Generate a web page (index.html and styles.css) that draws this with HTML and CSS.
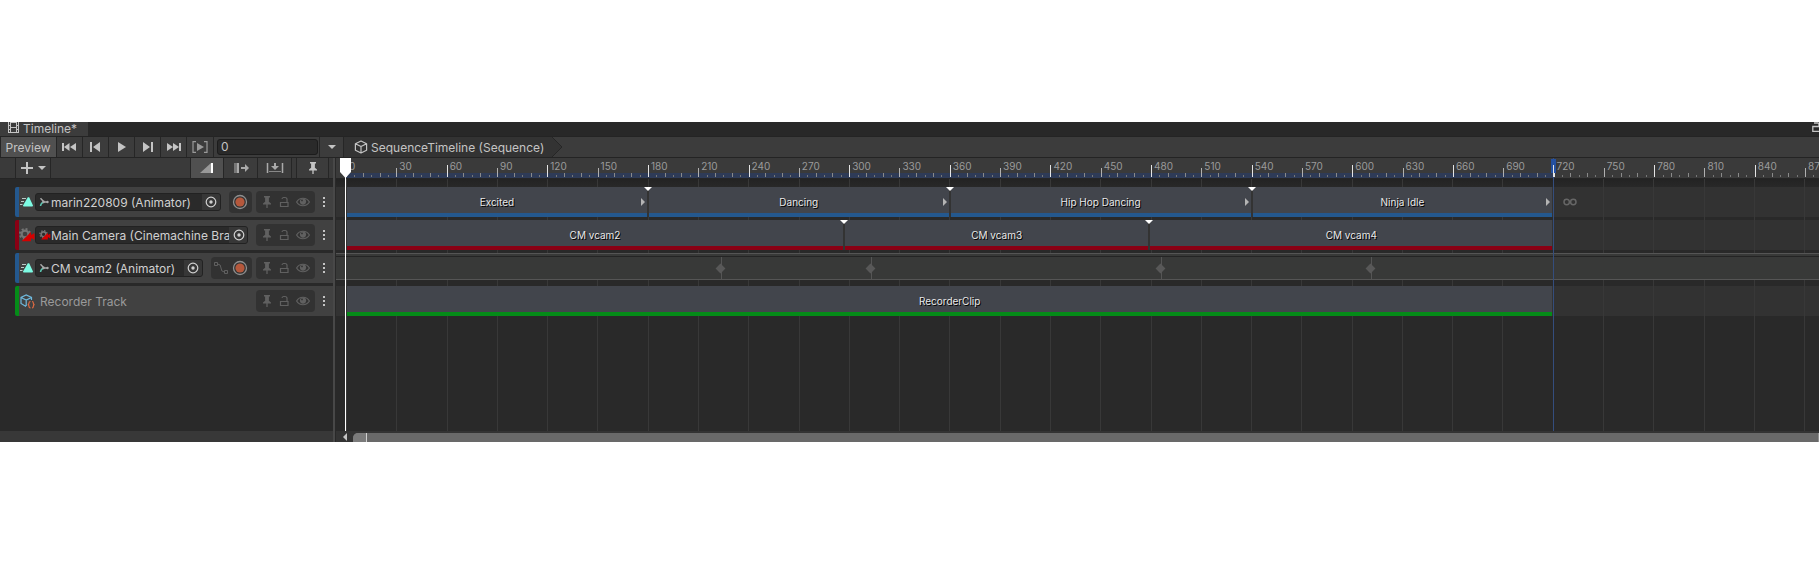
FILE: index.html
```html
<!DOCTYPE html>
<html lang="en">
<head>
<meta charset="utf-8">
<title>Timeline</title>
<link rel="stylesheet" href="styles.css">
</head>
<body>
<svg class="defs" aria-hidden="true">
  <symbol id="pin" viewBox="0 0 10 14"><path d="M2 1h6v1.6H6.9v4.2L9 8.4v1H1v-1l2.100-1.600V2.600H2z" fill="currentColor"/><path d="M5 9v4" stroke="currentColor" stroke-width="1.300"/></symbol>
  <symbol id="lock" viewBox="0 0 10 12"><path d="M1.500 6.500h7.500v4h-7.500zM8 6.500V3a2 2 0 0 0-2-1.500H4.500A1.800 1.800 0 0 0 3 3" fill="none" stroke="currentColor" stroke-width="1.200"/></symbol>
  <symbol id="eye" viewBox="0 0 14 10"><path d="M.6 5C3.500 0 10.500 0 13.400 5 10.500 10 3.500 10 .6 5z" fill="none" stroke="currentColor" stroke-width="1.200"/><circle cx="7" cy="4.600" r="3.100" fill="currentColor"/><circle cx="6" cy="3.400" r=".9" fill="#323232"/></symbol>
  <symbol id="picker" viewBox="0 0 12 12"><circle cx="6" cy="6" r="4.800" fill="none" stroke="currentColor" stroke-width="1.200"/><circle cx="6" cy="6" r="1.700" fill="currentColor"/></symbol>
  <symbol id="record" viewBox="0 0 16 16"><circle cx="8" cy="8" r="6.500" fill="none" stroke="#8f8f8f" stroke-width="1.300"/><circle cx="8" cy="8" r="4.600" fill="#b5583c"/></symbol>
  <symbol id="anim" viewBox="0 0 14 12"><path d="M7.800 1.200h1.400L13 9.500q0 1-1 1H4q-1.200 0-1-1z" fill="#7dfbe3"/><path d="M2 2.500H6M1 5.500h3M0 8.500h2.500" stroke="#b9c9c6" stroke-width="1"/></symbol>
  <symbol id="rig" viewBox="0 0 10 10"><path d="M1.500 1.200l3 3.300M5 5h4" stroke="#a9a9a9" stroke-width="1.400"/><path d="M4.500 5.300Q2 6 1.500 9" fill="none" stroke="#5cc5b0" stroke-width="1.500"/><circle cx="4.500" cy="4.900" r="1.300" fill="#a9a9a9"/><circle cx="8.500" cy="5" r="1.200" fill="#a9a9a9"/></symbol>
  <symbol id="cine" viewBox="0 0 16 14"><circle cx="6" cy="6" r="3.400" fill="none" stroke="#757575" stroke-width="2.200"/><circle cx="6" cy="6" r="5.100" fill="none" stroke="#757575" stroke-width="1.800" stroke-dasharray="2 2"/><path d="M2.500 13.200L12 4v2.500l1 .3 1.500-1.300h1v6h-1L13 10.300l-1 .4v2.500z" fill="#d40000"/></symbol>
  <symbol id="cube" viewBox="0 0 14 14"><path d="M7 1l5.600 2.700v6.600L7 13l-5.600-2.700V3.700zM1.400 3.700L7 6.500l5.600-2.800M7 6.500V13" fill="none" stroke="currentColor" stroke-width="1.200" stroke-linejoin="round"/></symbol>
  <symbol id="dots" viewBox="0 0 4 12"><path d="M1 1h2v2H1zM1 5h2v2H1zM1 9h2v2H1z" fill="#c4c4c4"/></symbol>
</svg>

<main class="editor">
  <header class="tabs">
    <div class="tab">
      <svg width="13" height="12" viewBox="0 0 13 12"><path d="M1.500 0v11M11.500 0v11M3.500 0v11M9.500 0v11M3 .5h7M1 10.500h11M3 5.500h7M1 3.500h2M1 7.500h2M10 3.500h2M10 7.500h2" stroke="#c4c4c4" fill="none"/></svg>
      <span>Timeline*</span>
    </div>
    <button class="tab-lock" aria-label="Lock"><svg width="7" height="10" viewBox="0 0 7 10"><path d="M8 4.500H.8v4.800H8M2 1h4q1 0 1 3" fill="none" stroke="#c4c4c4" stroke-width="1.300"/></svg></button>
  </header>

  <nav class="toolbar">
    <button class="tool preview">Preview</button>
    <button class="tool" aria-label="First frame"><svg width="16" height="10" viewBox="0 0 16 10"><path d="M1 1h2v8H1zM8.500 1v8L3 5zM15 1v8L9 5z" fill="currentColor"/></svg></button>
    <button class="tool" aria-label="Previous frame"><svg width="12" height="10" viewBox="0 0 12 10"><path d="M1 0h2v10H1zM11 0v10L4 5z" fill="currentColor"/></svg></button>
    <button class="tool" aria-label="Play"><svg width="10" height="12" viewBox="0 0 10 12"><path d="M1 1v10l8-5z" fill="currentColor"/></svg></button>
    <button class="tool" aria-label="Next frame"><svg width="12" height="10" viewBox="0 0 12 10"><path d="M9 0h2v10H9zM1 0v10l7-5z" fill="currentColor"/></svg></button>
    <button class="tool" aria-label="Last frame"><svg width="16" height="10" viewBox="0 0 16 10"><path d="M13 1h2v8h-2zM7 1v8l6-4zM1 1v8l6-4z" fill="currentColor"/></svg></button>
    <button class="tool dim" aria-label="Play range"><svg width="16" height="12" viewBox="0 0 16 12"><path d="M4 .6H1v10.800h3M12 .6h3v10.800h-3" fill="none" stroke="currentColor" stroke-width="1.200"/><path d="M5 2v8l7-4z" fill="currentColor"/></svg></button>
    <div class="frame-box"><input class="frame" aria-label="Frame" value="0"></div>
    <button class="tool drop" aria-label="Select timeline"><svg width="8" height="4" viewBox="0 0 8 4"><path d="M0 0h8L4 4z" fill="currentColor"/></svg></button>
    <a class="crumb" href="#"><svg width="14" height="14"><use href="#cube"/></svg><span>SequenceTimeline (Sequence)</span></a><svg width="11" height="20" viewBox="0 0 11 20"><path d="M0 0l10 10L0 20z" fill="#333"/><path d="M0 0l10 10L0 20" fill="none" stroke="#262626"/></svg>
  </nav>

  <div class="panes">
    <section class="left">
      <div class="options">
        <button class="add" aria-label="Add track"><svg width="26" height="12" viewBox="0 0 26 12"><path d="M1 6h12M7 0v12" stroke="currentColor" stroke-width="2"/><path d="M18 4h8l-4 4z" fill="currentColor"/></svg></button>
        <button class="mode on" aria-label="Mix mode"><svg width="14" height="10" viewBox="0 0 14 10"><path d="M0 10L11 0v10z" fill="#999"/><path d="M11 0h2v10h-2z" fill="#fff"/></svg></button>
        <button class="mode" aria-label="Ripple mode"><svg width="16" height="10" viewBox="0 0 16 10"><path d="M1 0h3v10H1z" fill="#777"/><path d="M4 0h2v10H4z" fill="#aaa"/><path d="M8 4h4V1l4 4-4 4V6H8z" fill="#aaa"/></svg></button>
        <button class="mode" aria-label="Replace mode"><svg width="18" height="10" viewBox="0 0 18 10"><path d="M1.500 0v10M16.500 0v10" stroke="#aaa" stroke-width="1.500"/><path d="M3 8.500h12" stroke="#888"/><path d="M8 0h2v3h3L9 7 5 3h3z" fill="#aaa"/></svg></button>
        <button class="mode pin" aria-label="Show markers"><svg width="10" height="14"><use href="#pin"/></svg></button>
      </div>
      <ul class="tracks">
        <li class="track blue">
          <svg class="kind" width="14" height="12"><use href="#anim"/></svg>
          <div class="field w-a"><svg width="10" height="10"><use href="#rig"/></svg><span>marin220809 (Animator)</span><button aria-label="Pick object"><svg width="12" height="12"><use href="#picker"/></svg></button></div>
          <div class="group rec"><button aria-label="Record"><svg width="16" height="16"><use href="#record"/></svg></button></div>
          <div class="group states"><button aria-label="Pin"><svg width="10" height="14"><use href="#pin"/></svg></button><button aria-label="Lock"><svg width="10" height="12"><use href="#lock"/></svg></button><button aria-label="Mute"><svg width="14" height="10"><use href="#eye"/></svg></button></div>
          <button class="more" aria-label="More"><svg width="4" height="12"><use href="#dots"/></svg></button>
        </li>
        <li class="track red">
          <svg class="kind" width="16" height="14"><use href="#cine"/></svg>
          <div class="field w-b"><svg width="12" height="10"><use href="#cine"/></svg><span>Main Camera (Cinemachine Bra</span><button aria-label="Pick object"><svg width="12" height="12"><use href="#picker"/></svg></button></div>
          <div class="group states solo"><button aria-label="Pin"><svg width="10" height="14"><use href="#pin"/></svg></button><button aria-label="Lock"><svg width="10" height="12"><use href="#lock"/></svg></button><button aria-label="Mute"><svg width="14" height="10"><use href="#eye"/></svg></button></div>
          <button class="more" aria-label="More"><svg width="4" height="12"><use href="#dots"/></svg></button>
        </li>
        <li class="track blue">
          <svg class="kind" width="14" height="12"><use href="#anim"/></svg>
          <div class="field w-c"><svg width="10" height="10"><use href="#rig"/></svg><span>CM vcam2 (Animator)</span><button aria-label="Pick object"><svg width="12" height="12"><use href="#picker"/></svg></button></div>
          <div class="group rec"><button aria-label="Curves"><svg width="14" height="12" viewBox="0 0 14 12"><path d="M.5.500h3v3h-3zM10.500 8.500h3v3h-3zM3.500 2Q7 2 7 6t3.500 4" fill="none" stroke="#606060"/></svg></button><button aria-label="Record"><svg width="16" height="16"><use href="#record"/></svg></button></div>
          <div class="group states"><button aria-label="Pin"><svg width="10" height="14"><use href="#pin"/></svg></button><button aria-label="Lock"><svg width="10" height="12"><use href="#lock"/></svg></button><button aria-label="Mute"><svg width="14" height="10"><use href="#eye"/></svg></button></div>
          <button class="more" aria-label="More"><svg width="4" height="12"><use href="#dots"/></svg></button>
        </li>
        <li class="track green">
          <svg class="kind" width="15" height="15" viewBox="0 0 15 15"><path d="M11.500 6V3.500L6.200 1 1 3.500v6L6 12.500M1 3.500L6.200 6l5.300-2.500M6.200 6v6" fill="none" stroke="#6fb9dd" stroke-width="1.200"/><path d="M10.500 7.500q-1.500 0-1.500 1.500t-1.200 1.700q1.200.2 1.200 1.700t1.500 1.500M12 7.500q1.300 0 1.300 1.500t1.200 1.700q-1.200.2-1.200 1.700T12 13.900" fill="none" stroke="#e06a42" stroke-width="1.200"/></svg>
          <span class="name">Recorder Track</span>
          <div class="group states solo"><button aria-label="Pin"><svg width="10" height="14"><use href="#pin"/></svg></button><button aria-label="Lock"><svg width="10" height="12"><use href="#lock"/></svg></button><button aria-label="Mute"><svg width="14" height="10"><use href="#eye"/></svg></button></div>
          <button class="more" aria-label="More"><svg width="4" height="12"><use href="#dots"/></svg></button>
        </li>
      </ul>
      <div class="left-foot"></div>
    </section>

    <section class="right">
      <div class="ruler"><div class="range"></div><div class="cells" id="ruler"></div></div>
      <div class="canvas">
        <div class="grid" id="grid"></div>
        <div class="lane blue">
          <div class="clip" style="flex-grow:180"><span>Excited</span></div>
          <div class="clip cut" style="flex-grow:180"><span>Dancing</span></div>
          <div class="clip cut" style="flex-grow:180"><span>Hip Hop Dancing</span></div>
          <div class="clip cut" style="flex-grow:180"><span>Ninja Idle</span></div>
          <div class="rest" style="flex-grow:158.4"><svg width="14" height="8" viewBox="0 0 14 8"><circle cx="3.700" cy="4" r="2.700" fill="none" stroke="#666" stroke-width="1.500"/><circle cx="10.300" cy="4" r="2.700" fill="none" stroke="#666" stroke-width="1.500"/><path d="M6 4h2" stroke="#666" stroke-width="1.500"/></svg></div>
        </div>
        <div class="lane red">
          <div class="clip" style="flex-grow:297"><span>CM vcam2</span></div>
          <div class="clip cut" style="flex-grow:182"><span>CM vcam3</span></div>
          <div class="clip cut" style="flex-grow:241"><span>CM vcam4</span></div>
          <div class="rest" style="flex-grow:158.4"></div>
        </div>
        <div class="lane keys">
          <div class="span" style="flex-grow:224.5"></div>
          <div class="span key" style="flex-grow:89"></div>
          <div class="span key" style="flex-grow:172.5"></div>
          <div class="span key" style="flex-grow:125"></div>
          <div class="span key" style="flex-grow:267.4"></div>
        </div>
        <div class="lane green">
          <div class="clip" style="flex-grow:720"><span>RecorderClip</span></div>
          <div class="rest" style="flex-grow:158.4"></div>
        </div>
      </div>
      <div class="overlay">
        <div class="play"><svg width="11" height="20" viewBox="0 0 11 20"><path d="M0 0h11v14l-5 5.500H5L0 14z" fill="#fff"/></svg></div>
        <div class="end"></div>
      </div>
      <div class="scroll">
        <svg width="4" height="8" viewBox="0 0 4 8"><path d="M4 0v8L0 4z" fill="#c4c4c4"/></svg>
        <div class="thumb"><div class="grip"></div></div>
      </div>
    </section>
  </div>
</main>
<script src="ruler.js"></script>
</body>
</html>
```

FILE: ruler.js
```js
const TOTAL = 878.4;
const MAJOR = 30;
const MINOR = 5;
const ruler = document.getElementById('ruler');
const grid = document.getElementById('grid');

for (let frame = 0; frame < TOTAL; frame += MAJOR) {
  const length = Math.min(MAJOR, TOTAL - frame);

  const line = document.createElement('div');
  line.style.flexGrow = length;
  grid.append(line);

  const cell = document.createElement('div');
  cell.className = 'cell' + (frame % 60 === 0 ? ' even' : '');
  cell.style.flexGrow = length;
  const label = document.createElement('span');
  label.textContent = frame;
  cell.append(label);
  for (let t = 0; t < length; t += MINOR) {
    const tick = document.createElement('i');
    tick.className = t === 0 ? 'major' : t % 10 === 0 ? 'mid' : 'small';
    tick.style.flexGrow = Math.min(MINOR, length - t);
    cell.append(tick);
  }
  ruler.append(cell);
}
```

FILE: styles.css
```css
* { box-sizing: border-box; }
body { margin: 0; padding: 122px 0; background: #fff; color: #c4c4c4; font: 12px/16px Inter, "Liberation Sans", sans-serif; }
button { margin: 0; padding: 0; border: 0; background: none; color: inherit; font: inherit; display: flex; align-items: center; justify-content: center; }
svg { display: block; flex: none; }
.defs { position: absolute; width: 0; height: 0; }

.editor { background: #292929; overflow: hidden; }
.tabs { display: flex; justify-content: space-between; height: 14px; background: #282828; overflow: hidden; }
.tab { display: flex; align-items: flex-start; gap: 3px; width: 88px; padding-left: 7px; background: #3c3c3c; }
.tab span { line-height: 14px; }
.tab-lock { align-items: flex-start; }

.toolbar { display: flex; height: 22px; background: #3c3c3c; border: solid #242424; border-width: 1px 0; }
.tool { width: 26px; border-right: 1px solid #262626; }
.tool.preview { width: 57px; padding: 1px 1px 0 0; border-left: 1px solid #262626; background: #505050; }
.tool:nth-child(2), .tool:nth-child(3) { padding-right: 2px; }
.tool.dim { width: 27px; color: #999; }
.tool.drop { width: 24px; }
.frame-box { display: flex; align-items: center; padding: 0 1px 0 3px; width: 106px; border-right: 1px solid #262626; }
.frame { width: 100%; height: 16px; padding: 0 3px; border: 1px solid #1c1c1c; border-radius: 3px; background: #2a2a2a; color: #c4c4c4; font: inherit; }
.crumb { display: flex; align-items: center; gap: 3px; padding: 0 8px 0 10px; background: #333; color: #c4c4c4; text-decoration: none; white-space: nowrap; }
.crumb span { padding-top: 2px; }

.panes { display: flex; }
.left { width: 335px; flex: none; display: flex; flex-direction: column; border-right: 2px solid #484848; }
.options { display: flex; height: 21px; padding-left: 15px; padding-right: 4px; background: #3a3a3a; border-bottom: 1px solid #252525; }
.add { width: 36px; border: solid #262626; border-width: 0 1px; background: #3c3c3c; margin-right: auto; }
.mode { width: 34px; border-right: 1px solid #262626; background: #3c3c3c; }
.mode.on { background: #505050; border-left: 1px solid #262626; }
.mode.pin { width: 33px; margin-left: 4px; border-left: 1px solid #262626; }

.tracks { display: flex; flex-direction: column; flex: 1; gap: 3px; margin: 0; padding: 8px 0 0 15px; list-style: none; }
.track { display: flex; align-items: center; height: 30px; padding-right: 7px; background: #414141; border-left: 4px solid; border-radius: 2px 0 0 2px; }
.blue { --accent: #24588e; }
.red { --accent: #8a0014; }
.green { --accent: #058b18; }
.track { border-left-color: var(--accent); }
.kind { margin: 0 1px; }
.red .kind { margin: 0; }
.field { display: flex; align-items: center; gap: 2px; height: 18px; padding-left: 3px; border: 1px solid #222; border-radius: 3px; background: #2a2a2a; color: #d0d0d0; overflow: hidden; }
.field span { flex: 1; min-width: 0; padding-top: 2px; white-space: nowrap; }
.field button { flex: none; width: 18px; height: 16px; margin-left: -2px; background: #373737; }
.field.w-a { width: 186px; }
.field.w-b { width: 213px; }
.red .field svg:first-child { margin-right: -2px; }
.field.w-c { width: 168px; }
.name { margin-left: 4px; padding-top: 2px; color: #9a9a9a; }
.group { display: flex; align-items: center; height: 22px; border-radius: 4px; background: #323232; }
.rec { gap: 4px; margin-left: auto; padding: 0 4px 0 3px; }
.states { gap: 7px; margin-left: 4px; padding: 0 5px 0 6px; color: #606060; }
.states.solo { margin-left: auto; }
.more { margin-left: 7px; }
.left-foot { height: 11px; background: #383838; }

.right { position: relative; flex: 1; min-width: 0; border-left: 1px solid #292929; overflow: hidden; }
.ruler { position: relative; height: 21px; padding-left: 10px; background: #3a3a3a; border-bottom: 1px solid #252525; }
.range { position: absolute; left: 10px; right: 0; bottom: 0; height: 5px; background: linear-gradient(#2e3b57, #2e3b57) left / 82% 100% no-repeat; }
.cells, .grid { display: flex; }
.cells { height: 20px; }
.cell { position: relative; flex: 30 0 0; min-width: 0; display: flex; align-items: flex-end; padding-bottom: 1px; }
.cell span { position: absolute; left: 3px; top: 1px; color: #9a9a9a; font-size: 10px; line-height: 14px; }
.cell i { flex: 5 0 0; background: linear-gradient(currentColor, currentColor) left / 1px 100% no-repeat; color: #777; }
.cell .small { height: 2px; }
.cell .mid { height: 4px; color: #8a8a8a; }
.cell .major { height: 9px; color: #b0b0b0; }
.cell.even .major { height: 12px; color: #e4e4e4; }

.canvas { position: relative; display: flex; flex-direction: column; gap: 3px; height: 252px; padding-top: 8px; background: linear-gradient(#232323, #292929 9px); }
.grid { position: absolute; inset: 0 0 0 10px; }
.grid div { flex: 30 0 0; border-left: 1px solid #383838; }
.lane { display: flex; height: 30px; padding-left: 10px; background: #323232; }
.clip { position: relative; flex: 1 0 0; min-width: 0; display: flex; background: #333; }
.clip span { flex: 1; margin: 0 1px; padding-top: 1px; border-bottom: 4px solid var(--accent); background: #42454c; color: #e8e8e8; font-size: 10px; line-height: 29px; text-align: center; text-shadow: 1px 1px 0 #000; white-space: nowrap; }
.lane.blue .clip::after { content: ""; position: absolute; right: 3px; top: 11px; border: solid transparent; border-width: 4px 0 4px 4px; border-left-color: #b4b4b4; }
.clip.cut::before { content: ""; position: absolute; left: -4px; top: 0; border: 4px solid transparent; border-bottom-width: 0; border-top-color: #fff; }
.rest { flex: 1 0 0; display: flex; align-items: center; }
.rest svg { margin-left: 10px; }
.keys { position: relative; background: #383938; border: solid #555; border-width: 1px 0; height: 27px; margin-bottom: 3px; }
.keys::before { content: ""; position: absolute; left: 0; right: 0; top: 2px; height: 1px; background: #242424; }
.span { flex: 1 0 0; background: #383938; margin-top: 3px; }
.key { position: relative; border-left: 1px solid #555; }
.key::before { content: ""; position: absolute; left: -5px; top: 8px; width: 7px; height: 7px; background: #585858; transform: rotate(45deg); }

.overlay { position: absolute; inset: 0 0 11px 9px; display: flex; pointer-events: none; }
.play { position: relative; flex: 720 0 0; border-left: 1px solid #fff; }
.play svg { position: absolute; left: -6px; top: 0; }
.end { position: relative; flex: 158.4 0 0; border-left: 1px solid #344d7d; }
.end::before { content: ""; position: absolute; left: -3px; top: 1px; width: 5px; height: 14px; background: #2450a0; }
.end::after { content: ""; position: absolute; left: -1px; top: 7px; width: 1px; height: 12px; background: #e4e4e4; }
.scroll { display: flex; gap: 6px; height: 11px; padding: 2px 0 0 7px; background: #333; }
.thumb { flex: 1; background: #696969; border-right: 1px solid #909090; border-radius: 5px 0 0 0; overflow: hidden; }
.grip { width: 14px; height: 9px; background: #7b7b7b; border-right: 1px solid #d0d0d0; }
```
